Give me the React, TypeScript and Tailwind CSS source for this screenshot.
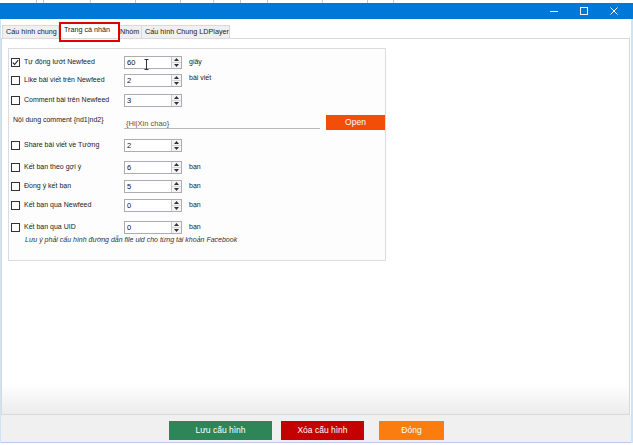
import React from 'react';

const font = { fontFamily: '"Liberation Sans", Arial, sans-serif' };

const Check: React.FC<{ checked?: boolean }> = ({ checked }) => (
  <div className="w-[9px] h-[9px] border border-[#333] bg-white flex items-center justify-center shrink-0">
    {checked && (
      <svg width="7" height="7" viewBox="0 0 7 7">
        <path d="M0.8 3.6 L2.7 5.5 L6.2 1.2" fill="none" stroke="#222" strokeWidth="1.1" />
      </svg>
    )}
  </div>
);

const Spin: React.FC<{ value: string; cursor?: boolean }> = ({ value, cursor }) => (
  <div className="relative w-[58px] h-[13px] border border-[#abadb3] bg-white flex">
    <div className="flex-1 pl-[2px] text-[7.5px] leading-[11px] text-[#111]">{value}</div>
    <div className="w-[10px] border-l border-[#c8c8c8] flex flex-col bg-[#f4f4f4]">
      <div className="flex-1 flex items-center justify-center border-b border-[#d6d6d6]">
        <svg width="5" height="3" viewBox="0 0 5 3"><path d="M0 3 L2.5 0 L5 3Z" fill="#333" /></svg>
      </div>
      <div className="flex-1 flex items-center justify-center">
        <svg width="5" height="3" viewBox="0 0 5 3"><path d="M0 0 L2.5 3 L5 0Z" fill="#333" /></svg>
      </div>
    </div>
    {cursor && (
      <svg className="absolute left-[19px] top-[2px]" width="5" height="11" viewBox="0 0 5 11">
        <path d="M0.5 0.5 H4.5 M2.5 0.5 V10.5 M0.5 10.5 H4.5" stroke="#333" strokeWidth="1" fill="none" />
      </svg>
    )}
  </div>
);

const Row: React.FC<{ label: string; value: string; unit?: string; checked?: boolean; cls: string; unitCls?: string; cursor?: boolean }> = ({ label, value, unit, checked, cls, unitCls, cursor }) => (
  <div className={`flex items-center h-[14px] ${cls}`}>
    <div className="w-[115px] pl-[2px] flex items-center gap-[4px]">
      <Check checked={checked} />
      <span className="text-[7px] text-[#222] whitespace-nowrap">{label}</span>
    </div>
    <Spin value={value} cursor={cursor} />
    {unit && <span className={`ml-[7px] text-[7px] text-[#222] ${unitCls ?? ''}`}>{unit}</span>}
  </div>
);

const App: React.FC = () => {
  const seps = [36, 43, 90, 135, 180, 213, 240, 267, 322, 367, 393];
  return (
    <div className="w-[633px] h-[445px] bg-white flex flex-col overflow-hidden" style={font}>
      {/* strip above window */}
      <div className="h-[3px] relative bg-white">
        {seps.map((x) => (
          <div key={x} className="absolute top-0 h-[3px] w-px bg-[#c9c9c9]" style={{ left: x }} />
        ))}
      </div>
      {/* title bar */}
      <div className="h-[16px] bg-[#0078d7] flex items-center justify-end">
        <div className="w-[30px] flex justify-center">
          <div className="w-[8px] h-px bg-white opacity-90" />
        </div>
        <div className="w-[30px] flex justify-center">
          <div className="w-[8px] h-[8px] border border-white opacity-90" />
        </div>
        <div className="w-[30px] flex justify-center mr-[4px]">
          <svg width="8" height="8" viewBox="0 0 8 8"><path d="M0.5 0.5 L7.5 7.5 M7.5 0.5 L0.5 7.5" stroke="white" strokeWidth="1" /></svg>
        </div>
      </div>
      {/* window body */}
      <div className="flex-1 flex flex-col border-l border-r-[2px] border-[#cfe3f6] bg-white">
        {/* tabs */}
        <div className="relative h-[19px] flex items-end pl-px whitespace-nowrap">
          <div className="h-[13px] pl-[3px] border border-b-0 border-[#d9d9d9] bg-[#f0f0f0] text-[7.2px] leading-[12px] text-[#222] w-[57px]">Cấu hình chung</div>
          <div className="h-[16px] pl-[4px] border border-b-0 border-[#d9d9d9] bg-white text-[7.2px] leading-[13px] text-[#222] w-[60px]">Trang cá nhân</div>
          <div className="h-[13px] pl-[1px] border border-b-0 border-l-0 border-[#d9d9d9] bg-[#f0f0f0] text-[7.2px] leading-[12px] text-[#222] w-[23px]">Nhóm</div>
          <div className="h-[13px] pl-[3px] border border-b-0 border-l-0 border-[#d9d9d9] bg-[#f0f0f0] text-[7.2px] leading-[12px] text-[#222] w-[88px]">Cấu hình Chung LDPlayer</div>
          <div className="absolute left-[58px] top-[3px] w-[61px] h-[20px] border-[2px] border-[#e00000]" />
        </div>
        {/* tab page */}
        <div className="h-[377px] border border-[#d9d9d9] mr-[1px] bg-gradient-to-b from-white from-[92%] to-[#ececec] pl-[6px] pt-[9px]">
          <div className="w-[378px] h-[213px] border border-[#dcdcdc] bg-[#fdfdfd] flex flex-col">
            <Row label="Tự động lướt Newfeed" value="60" unit="giây" checked cls="mt-[6px]" cursor />
            <Row label="Like bài viết trên Newfeed" value="2" unit="bài viết" cls="mt-[4px]" unitCls="-mt-[3px]" />
            <Row label="Comment bài trên Newfeed" value="3" cls="mt-[6px]" />
            <div className="flex h-[15px] mt-[8px]">
              <div className="w-[115px] pl-[4px] text-[7px] text-[#222] leading-[10px] whitespace-nowrap">Nội dung comment {'{nd1|nd2}'}</div>
              <div className="w-[196px] h-[14px] border-b border-[#b9b9b9] text-[7.5px] text-[#555] pl-[2px] pt-[5px] leading-[8px]">{'{Hi|Xin chao}'}</div>
              <div className="ml-[6px] flex-1 bg-[#f24e0a] text-white text-[8.5px] flex items-center justify-center">Open</div>
            </div>
            <Row label="Share bài viết về Tường" value="2" cls="mt-[8px]" />
            <Row label="Kết bạn theo gợi ý" value="6" unit="bạn" cls="mt-[8px]" />
            <Row label="Đồng ý kết bạn" value="5" unit="bạn" cls="mt-[5px]" />
            <Row label="Kết bạn qua Newfeed" value="0" unit="bạn" cls="mt-[5px]" />
            <Row label="Kết bạn qua UID" value="0" unit="bạn" cls="mt-[8px]" />
            <div className="pl-[16px] mt-[1px] text-[7px] italic text-[#333] leading-[10px] whitespace-nowrap">Lưu ý phải cấu hình đường dẫn file uid cho từng tài khoản Facebook</div>
          </div>
        </div>
        {/* bottom bar */}
        <div className="flex-1 bg-[#f0f0f0] border-b border-[#b7cbe6] flex items-start pt-[6px] pl-[168px]">
          <div className="w-[103px] h-[19px] bg-[#2e8658] text-white text-[8.5px] flex items-center justify-center">Lưu cấu hình</div>
          <div className="ml-[9px] w-[83px] h-[19px] bg-[#c40000] text-white text-[8.5px] flex items-center justify-center">Xóa cấu hình</div>
          <div className="ml-[15px] w-[65px] h-[19px] bg-[#fb7d10] text-white text-[8.5px] flex items-center justify-center">Đóng</div>
        </div>
      </div>
      <div className="h-[2px] bg-white" />
    </div>
  );
};

export default App;
